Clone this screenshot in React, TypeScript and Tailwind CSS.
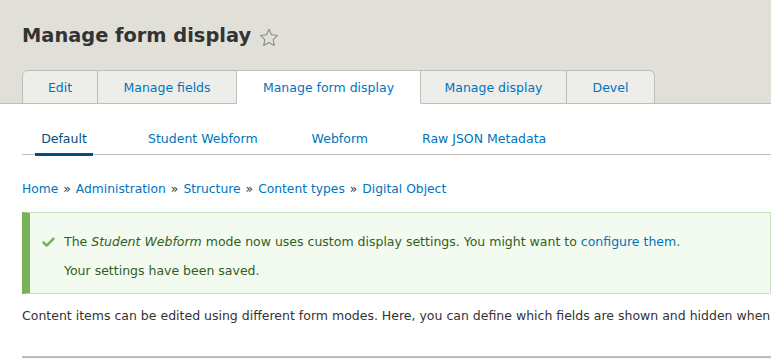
import { Check } from "lucide-react";

const tabs = [
  { label: "Edit", w: "w-[76px]" },
  { label: "Manage fields", w: "w-[139px]" },
  { label: "Manage form display", w: "w-[184px]", active: true },
  { label: "Manage display", w: "w-[146px]" },
  { label: "Devel", w: "w-[88px]" },
];

const subTabs = [
  { label: "Default", active: true, cls: "ml-[13px] w-[58px]" },
  { label: "Student Webform", cls: "ml-[55px]" },
  { label: "Webform", cls: "ml-[54px]" },
  { label: "Raw JSON Metadata", cls: "ml-[54px]" },
];

const crumbs = ["Home", "Administration", "Structure", "Content types", "Digital Object"];

function Star() {
  return (
    <svg width="20" height="19" viewBox="0 0 24 23" className="ml-[8px] mt-[3px]">
      <path
        d="M12 1.5l3.1 6.6 7.2.9-5.3 5 1.4 7.1L12 17.6l-6.4 3.5L7 14l-5.3-5 7.2-.9z"
        fill="none"
        stroke="#8d8d86"
        strokeWidth="1.3"
        strokeLinejoin="round"
      />
    </svg>
  );
}

export default function App() {
  return (
    <div className="w-[771px] h-[359px] overflow-hidden bg-white text-[#333] font-['DejaVu_Sans',sans-serif]">
      <div className="bg-[#e0e0d8] border-b border-[#bfbfba] pt-[21px] px-[22px]">
        <div className="flex items-center h-[30px]">
          <h1 className="text-[19.4px] font-bold text-[#333] leading-none">Manage form display</h1>
          <Star />
        </div>
        <div className="flex mt-[19px] h-[34px] -mb-px">
          {tabs.map((t, i) => (
            <div
              key={t.label}
              className={`${t.w} flex items-center justify-center pt-[3px] text-[12.5px] text-[#0074bd] border-t border-[#bfbfba] ${
                i === 0 ? "border-l rounded-tl-[6px]" : ""
              } ${i === tabs.length - 1 ? "rounded-tr-[6px]" : ""} border-r ${
                t.active ? "bg-white border-b border-b-white" : "bg-[#ededea] border-b border-b-[#bfbfba]"
              }`}
            >
              {t.label}
            </div>
          ))}
        </div>
      </div>

      <div className="px-[22px]">
        <div className="flex h-[51px] mr-[-22px] border-b border-[#bfbfba] items-end">
          {subTabs.map((s) => (
            <div
              key={s.label}
              className={`${s.cls} flex justify-center text-[12.5px] leading-[19px] ${
                s.active ? "text-[#004f80] border-b-[3px] border-[#004f80] -mb-[2px] pb-[5px]" : "text-[#0074bd] pb-[6px]"
              }`}
            >
              {s.label}
            </div>
          ))}
        </div>

        <div className="mt-[25px] text-[12.3px] text-[#0074bd] flex gap-[5px]">
          {crumbs.map((c, i) => (
            <span key={c} className="flex gap-[5px]">
              {i > 0 && <span className="text-[#333]">»</span>}
              <span>{c}</span>
            </span>
          ))}
        </div>

        <div className="mt-[14px] mr-[-22px] h-[82px] bg-[#f3faef] border border-[#c9e1bd] border-l-[8px] border-l-[#77b259] pl-[11px] pt-[20px] text-[12.5px] text-[#325e1c]">
          <div className="flex items-center">
            <Check size={15} strokeWidth={4} className="text-[#77b259]" />
            <span className="ml-[8px]">
              The <em>Student Webform</em> mode now uses custom display settings. You might want to{" "}
              <span className="text-[#0074bd]">configure them</span>.
            </span>
          </div>
          <div className="ml-[23px] mt-[10px]">Your settings have been saved.</div>
        </div>

        <p className="mt-[13px] text-[12.5px] whitespace-nowrap">
          Content items can be edited using different form modes. Here, you can define which fields are shown and hidden when
        </p>

        <div className="mt-[30px] mr-[-22px] border-t-2 border-[#bfbfba] h-[4px] bg-[#f5f5f2]" />
      </div>
    </div>
  );
}
